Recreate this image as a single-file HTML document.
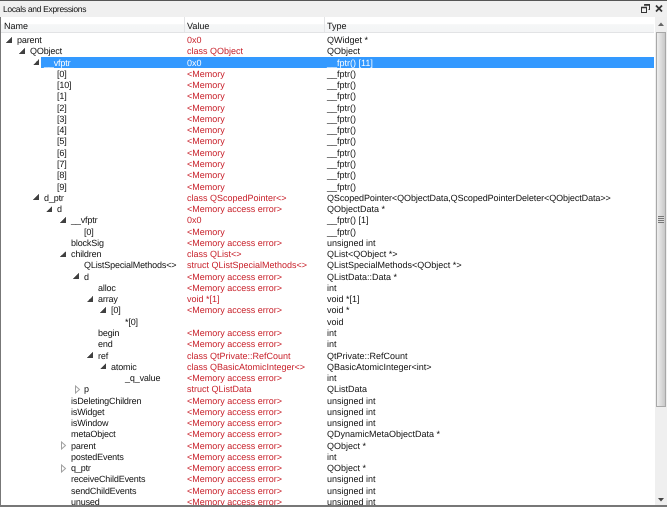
<!DOCTYPE html>
<html><head><meta charset="utf-8"><style>
html,body{margin:0;padding:0}
body{width:667px;height:507px;overflow:hidden;background:#fff;position:relative;font:9px/11.27px "Liberation Sans",sans-serif;color:#111;text-rendering:geometricPrecision}
.a{position:absolute}
.x{filter:blur(.3px)}
#rows{position:absolute;left:0;top:35.1px;width:655px;filter:blur(.3px)}
.r{height:11.27px;position:relative;white-space:nowrap}
.r span{position:absolute;top:0;letter-spacing:-.15px}
.r .v{left:187px;color:#c8202a;letter-spacing:0}
.r .t{left:327px;letter-spacing:0}
.o{position:absolute;width:6px;height:6px;top:1.500px;background:linear-gradient(135deg,transparent 50%,#404040 50%)}
svg.c{position:absolute;top:.5px;width:7px;height:9px}
</style></head><body>
<div class="a" style="left:0;top:0;width:667px;height:17px;background:#f0f0f0"></div>
<div class="a" style="left:0;top:0;width:667px;height:1px;background:#555"></div>
<div class="a x" style="left:3px;top:4.1px;font-size:8.5px;letter-spacing:-.3px">Locals and Expressions</div>
<svg class="a" style="left:641px;top:4px" width="22" height="10" viewBox="0 0 22 10"><path d="M3.5 .5h5v5h-1M.5 3.5h5v5h-5z" fill="none" stroke="#333"/><path d="M3 1h6M0 3.5h6" stroke="#333" stroke-width="1.4"/><path d="M15 1.5l6 6M21 1.500l-6 6" stroke="#333" stroke-width="1.7"/></svg>
<div class="a" style="left:1px;top:17px;width:653px;height:16px;background:linear-gradient(#fff 0,#fff 45%,#f5f6f7 50%,#f4f5f6 100%);border-bottom:1px solid #e2e3e5;box-sizing:border-box"></div>
<div class="a" style="left:184px;top:17px;width:1px;height:15px;background:#e3e4e6"></div>
<div class="a" style="left:324px;top:17px;width:1px;height:15px;background:#e3e4e6"></div>
<div class="a x" style="left:4px;top:20.6px">Name</div>
<div class="a x" style="left:187px;top:20.6px">Value</div>
<div class="a x" style="left:327px;top:20.6px">Type</div>
<div class="a" style="left:41px;top:57px;width:613px;height:11px;background:#3399ff"></div>
<div class="a" style="left:0;top:17px;width:1px;height:488px;background:#777"></div>
<div id="rows">
<div class="r"><i class="o" style="left:6px"></i><span style="left:17px">parent</span><span class="v">0x0</span><span class="t">QWidget *</span></div>
<div class="r"><i class="o" style="left:19px"></i><span style="left:30px">QObject</span><span class="v">class QObject</span><span class="t">QObject</span></div>
<div class="r"><i class="o" style="left:33px"></i><span style="left:44px;color:#fff">__vfptr</span><span class="v" style="color:#fff">0x0</span><span class="t" style="color:#fff">__fptr() [11]</span></div>
<div class="r"><span style="left:57px">[0]</span><span class="v">&lt;Memory</span><span class="t">__fptr()</span></div>
<div class="r"><span style="left:57px">[10]</span><span class="v">&lt;Memory</span><span class="t">__fptr()</span></div>
<div class="r"><span style="left:57px">[1]</span><span class="v">&lt;Memory</span><span class="t">__fptr()</span></div>
<div class="r"><span style="left:57px">[2]</span><span class="v">&lt;Memory</span><span class="t">__fptr()</span></div>
<div class="r"><span style="left:57px">[3]</span><span class="v">&lt;Memory</span><span class="t">__fptr()</span></div>
<div class="r"><span style="left:57px">[4]</span><span class="v">&lt;Memory</span><span class="t">__fptr()</span></div>
<div class="r"><span style="left:57px">[5]</span><span class="v">&lt;Memory</span><span class="t">__fptr()</span></div>
<div class="r"><span style="left:57px">[6]</span><span class="v">&lt;Memory</span><span class="t">__fptr()</span></div>
<div class="r"><span style="left:57px">[7]</span><span class="v">&lt;Memory</span><span class="t">__fptr()</span></div>
<div class="r"><span style="left:57px">[8]</span><span class="v">&lt;Memory</span><span class="t">__fptr()</span></div>
<div class="r"><span style="left:57px">[9]</span><span class="v">&lt;Memory</span><span class="t">__fptr()</span></div>
<div class="r"><i class="o" style="left:33px"></i><span style="left:44px">d_ptr</span><span class="v">class QScopedPointer&lt;&gt;</span><span class="t" style="letter-spacing:-.08px">QScopedPointer&lt;QObjectData,QScopedPointerDeleter&lt;QObjectData&gt;&gt;</span></div>
<div class="r"><i class="o" style="left:46px"></i><span style="left:57px">d</span><span class="v">&lt;Memory access error&gt;</span><span class="t">QObjectData *</span></div>
<div class="r"><i class="o" style="left:60px"></i><span style="left:71px">__vfptr</span><span class="v">0x0</span><span class="t">__fptr() [1]</span></div>
<div class="r"><span style="left:84px">[0]</span><span class="v">&lt;Memory</span><span class="t">__fptr()</span></div>
<div class="r"><span style="left:71px">blockSig</span><span class="v">&lt;Memory access error&gt;</span><span class="t">unsigned int</span></div>
<div class="r"><i class="o" style="left:60px"></i><span style="left:71px">children</span><span class="v">class QList&lt;&gt;</span><span class="t">QList&lt;QObject *&gt;</span></div>
<div class="r"><span style="left:84px">QListSpecialMethods&lt;&gt;</span><span class="v">struct QListSpecialMethods&lt;&gt;</span><span class="t">QListSpecialMethods&lt;QObject *&gt;</span></div>
<div class="r"><i class="o" style="left:73px"></i><span style="left:84px">d</span><span class="v">&lt;Memory access error&gt;</span><span class="t">QListData::Data *</span></div>
<div class="r"><span style="left:98px">alloc</span><span class="v">&lt;Memory access error&gt;</span><span class="t">int</span></div>
<div class="r"><i class="o" style="left:87px"></i><span style="left:98px">array</span><span class="v">void *[1]</span><span class="t">void *[1]</span></div>
<div class="r"><i class="o" style="left:100px"></i><span style="left:111px">[0]</span><span class="v">&lt;Memory access error&gt;</span><span class="t">void *</span></div>
<div class="r"><span style="left:125px">*[0]</span><span class="t">void</span></div>
<div class="r"><span style="left:98px">begin</span><span class="v">&lt;Memory access error&gt;</span><span class="t">int</span></div>
<div class="r"><span style="left:98px">end</span><span class="v">&lt;Memory access error&gt;</span><span class="t">int</span></div>
<div class="r"><i class="o" style="left:87px"></i><span style="left:98px">ref</span><span class="v">class QtPrivate::RefCount</span><span class="t">QtPrivate::RefCount</span></div>
<div class="r"><i class="o" style="left:100px"></i><span style="left:111px">atomic</span><span class="v">class QBasicAtomicInteger&lt;&gt;</span><span class="t">QBasicAtomicInteger&lt;int&gt;</span></div>
<div class="r"><span style="left:125px">_q_value</span><span class="v">&lt;Memory access error&gt;</span><span class="t">int</span></div>
<div class="r"><svg class="c" style="left:74px" viewBox="0 0 7 9"><path d="M1.500 1v7L5.500 4.500z" fill="#fff" stroke="#a0a0a0"/></svg><span style="left:84px">p</span><span class="v">struct QListData</span><span class="t">QListData</span></div>
<div class="r"><span style="left:71px">isDeletingChildren</span><span class="v">&lt;Memory access error&gt;</span><span class="t">unsigned int</span></div>
<div class="r"><span style="left:71px">isWidget</span><span class="v">&lt;Memory access error&gt;</span><span class="t">unsigned int</span></div>
<div class="r"><span style="left:71px">isWindow</span><span class="v">&lt;Memory access error&gt;</span><span class="t">unsigned int</span></div>
<div class="r"><span style="left:71px">metaObject</span><span class="v">&lt;Memory access error&gt;</span><span class="t">QDynamicMetaObjectData *</span></div>
<div class="r"><svg class="c" style="left:60px" viewBox="0 0 7 9"><path d="M1.500 1v7L5.500 4.500z" fill="#fff" stroke="#a0a0a0"/></svg><span style="left:71px">parent</span><span class="v">&lt;Memory access error&gt;</span><span class="t">QObject *</span></div>
<div class="r"><span style="left:71px">postedEvents</span><span class="v">&lt;Memory access error&gt;</span><span class="t">int</span></div>
<div class="r"><svg class="c" style="left:60px" viewBox="0 0 7 9"><path d="M1.500 1v7L5.500 4.500z" fill="#fff" stroke="#a0a0a0"/></svg><span style="left:71px">q_ptr</span><span class="v">&lt;Memory access error&gt;</span><span class="t">QObject *</span></div>
<div class="r"><span style="left:71px">receiveChildEvents</span><span class="v">&lt;Memory access error&gt;</span><span class="t">unsigned int</span></div>
<div class="r"><span style="left:71px">sendChildEvents</span><span class="v">&lt;Memory access error&gt;</span><span class="t">unsigned int</span></div>
<div class="r"><span style="left:71px">unused</span><span class="v">&lt;Memory access error&gt;</span><span class="t">unsigned int</span></div>
</div>
<div class="a" style="left:655px;top:17px;width:12px;height:488px;background:#efefef"></div>
<div class="a" style="left:656px;top:32px;width:10px;height:375px;box-sizing:border-box;border:1px solid #a8a8a8;background:linear-gradient(90deg,#eee,#dcdcdc 50%,#c8c8c8)"></div>
<div class="a" style="left:658px;top:216px;width:6px;height:7px;background:repeating-linear-gradient(#777 0,#777 1px,#ddd 1px,#ddd 2px)"></div>
<svg class="a" style="left:657px;top:20px" width="8" height="8"><path d="M1 6h6L4 2.500z" fill="#666"/></svg>
<svg class="a" style="left:657px;top:496px" width="8" height="8"><path d="M1 2h6L4 5.500z" fill="#444"/></svg>
<div class="a" style="left:0;top:505px;width:667px;height:2px;background:#777"></div>
</body></html>
